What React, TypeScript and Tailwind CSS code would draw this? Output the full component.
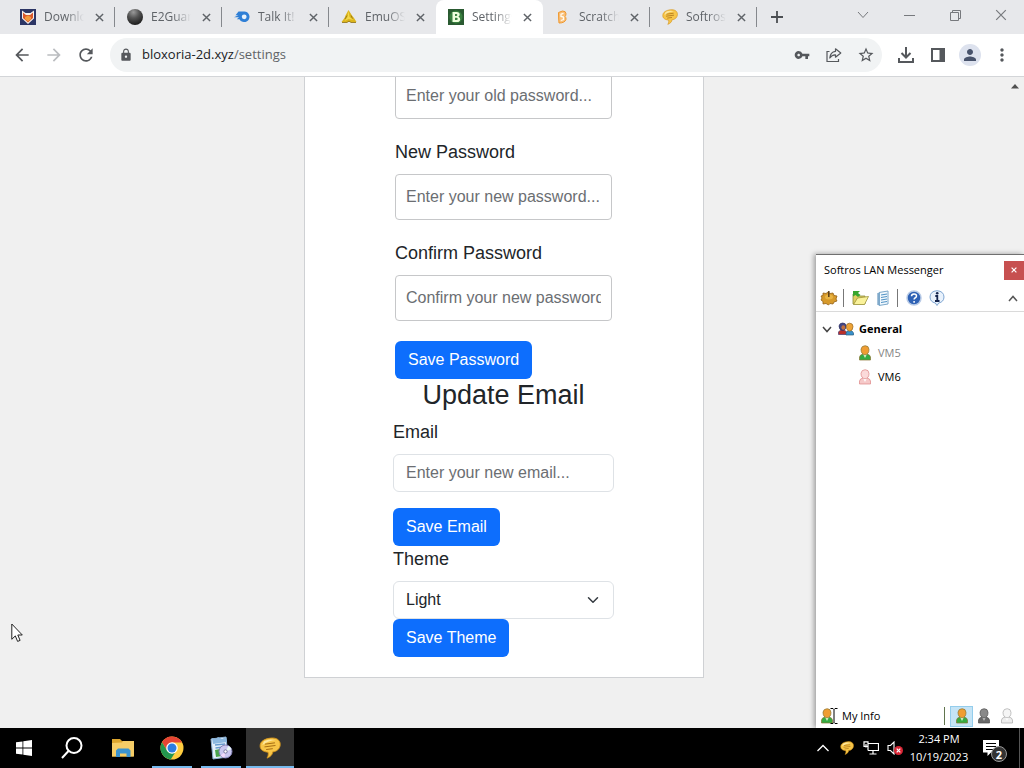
import React from "react";
import {
  MdArrowBack,
  MdArrowForward,
  MdRefresh,
  MdLock,
  MdVpnKey,
  MdStarBorder,
  MdMoreVert,
  MdPerson,
} from "react-icons/md";

function FoxIcon() {
  return (
    <svg viewBox="0 0 16 16" className="size-4">
      <rect width="16" height="16" fill="#2c3565" />
      <path d="M2 1.5 5.5 4h5L14 1.5v8L8 15 2 9.500z" fill="#f4f0ee" />
      <path d="M3 3.500 6 6h4l3-2.500V9l-5 4.500L3 9z" fill="#d9582b" />
      <path d="M5 8 8 6.500 11 8v2l-3 2.500L5 10z" fill="#f29a3c" />
    </svg>
  );
}

function SphereIcon() {
  return (
    <svg viewBox="0 0 16 16" className="size-4">
      <defs>
        <radialGradient id="sphere" cx="0.4" cy="0.2" r="0.8">
          <stop offset="0" stopColor="#9a9a9a" />
          <stop offset="0.45" stopColor="#555" />
          <stop offset="1" stopColor="#1c1c1c" />
        </radialGradient>
      </defs>
      <circle cx="8" cy="8" r="8" fill="url(#sphere)" />
    </svg>
  );
}

function TalkIcon() {
  return (
    <svg viewBox="0 0 16 16" className="size-4">
      <path d="M4.500 2.500h6a5.300 5.300 0 1 1-5 7.700H2.800L5 8.200H0l4.300-2H1.500z" fill="#2f7fd6" />
      <circle cx="10.200" cy="7.800" r="2.400" fill="#e8f2fc" />
    </svg>
  );
}

function EmuIcon() {
  return (
    <svg viewBox="0 0 16 16" className="size-4">
      <path d="M7.500 1 11 6.500 13 9l2.500 4H.5l3-4L4.500 6.500z" fill="#dcb51c" />
      <path d="m7.500 2 1 6 4 3-5-1-4 2 3-4z" fill="#f3d84a" />
      <path d="M1 13.500h5l2-1.500 2 1.500h5M6 6.500 4 10M10 6.500l1.500 3" fill="none" stroke="#94771a" strokeWidth="0.9" />
    </svg>
  );
}

function BloxIcon() {
  return (
    <svg viewBox="0 0 16 16" className="size-4">
      <rect width="16" height="16" fill="#2a5a31" />
      <circle cx="8" cy="8" r="6.500" fill="#39803f" />
      <path
        d="M4.500 3h4.200q3 0 3 2.500 0 1.600-1.300 2.200 1.800.6 1.800 2.500Q12.200 13 9 13H4.500zm2.500 2v2h1.300q1 0 1-1t-1-1zm0 3.800V11h1.500q1.200 0 1.200-1.100T8.500 8.800z"
        fill="#efffdd"
        fillRule="evenodd"
      />
    </svg>
  );
}

function ScratchIcon() {
  return (
    <svg viewBox="0 0 16 16" className="size-4">
      <path
        d="M3.500 3.500 7.500 2q3.500 0 3.500 2.700 0 1.800-1 2.800 1.200 1 1 2.800Q10 14 4 14l-.3-4z"
        fill="#f9bf78"
        stroke="#f0982d"
        strokeWidth="1"
      />
      <path d="M8.500 4.300 6 5.200v2.300l2.500.6v2.500L5.800 11.500" fill="none" stroke="#fffaf0" strokeWidth="1.300" />
    </svg>
  );
}

function ChatIcon({ className }: { className: string }) {
  return (
    <svg viewBox="0 0 20 20" className={className}>
      <path
        d="M10.500 1C16 .3 19.500 3 19.300 7c-.2 3.800-3.300 6.300-7 6.600.3 2-1.800 4.400-5 5.600 1-2 1.500-3.500.9-5.400C4 13.500.9 11.700 1 8 1.100 4 5 1.600 10.500 1z"
        fill="#f7c548"
        stroke="#d4941a"
        strokeWidth="0.800"
      />
      <path d="M4.500 3.800Q9 1.300 15 2.800 9 3 3 7.500z" fill="#fde79e" />
      <path d="m5.500 6.500 9-1.200M5 9l10-1.300M6.500 11.400l6-.8" stroke="#a66d12" strokeWidth="0.900" />
    </svg>
  );
}

function Cross({ className }: { className: string }) {
  return (
    <svg viewBox="0 0 10 10" className={className} fill="none" stroke="currentColor">
      <path d="m1 1 8 8M9 1 1 9" />
    </svg>
  );
}

const tabs = [
  { title: "Downloads", icon: <FoxIcon />, divider: true },
  { title: "E2Guardian", icon: <SphereIcon />, divider: true },
  { title: "Talk It!", icon: <TalkIcon />, divider: true },
  { title: "EmuOS v1", icon: <EmuIcon />, divider: false },
  { title: "Settings", icon: <BloxIcon />, active: true },
  { title: "Scratch - I", icon: <ScratchIcon />, divider: true },
  { title: "Softros LAN", icon: <ChatIcon className="size-4" />, divider: true },
];

function TabStrip() {
  return (
    <header className="flex h-[34px] items-stretch bg-[#e7e8eb] pl-2">
      {tabs.map((t) => (
        <div
          key={t.title}
          className={
            t.active
              ? "flex w-[107px] items-center rounded-t-lg bg-white pl-3"
              : "flex w-[107px] items-center pl-3"
          }
        >
          {t.icon}
          <span className="ml-2 w-10 overflow-hidden text-xs whitespace-nowrap text-[#5f6368] [mask-image:linear-gradient(to_right,black_55%,transparent)]">
            {t.title}
          </span>
          <button aria-label={`Close ${t.title}`} className="ml-auto flex size-4 items-center justify-center text-[#5f6368]">
            <Cross className="size-[9px] stroke-[1.600]" />
          </button>
          <span className={t.divider ? "ml-[7px] h-5 w-px bg-[#85888d]" : "ml-[7px] h-5 w-px"} />
        </div>
      ))}
      <button aria-label="New tab" className="flex w-10 items-center justify-center text-[#4b4e52]">
        <svg viewBox="0 0 12 12" className="size-3" stroke="currentColor" strokeWidth="1.800">
          <path d="M6 0v12M0 6h12" />
        </svg>
      </button>
      <div className="ml-auto flex h-[30px] text-[#77797d]">
        <button aria-label="Search tabs" className="flex w-[46px] items-center justify-center">
          <svg viewBox="0 0 12 8" className="h-2 w-3" fill="none" stroke="currentColor">
            <path d="m1 1 5 5.500L11 1" />
          </svg>
        </button>
        <button aria-label="Minimize" className="flex w-[46px] items-center justify-center">
          <span className="h-px w-[11px] bg-[#77797d]" />
        </button>
        <button aria-label="Restore" className="flex w-[46px] items-center justify-center">
          <svg viewBox="0 0 11 11" className="size-[11px]" fill="none" stroke="currentColor">
            <path d="M.5 2.500h8v8h-8zM2.500 2.500v-2h8v8h-2" />
          </svg>
        </button>
        <button aria-label="Close" className="flex w-[46px] items-center justify-center">
          <Cross className="size-3" />
        </button>
      </div>
    </header>
  );
}

const tool = "flex w-8 shrink-0 items-center justify-center";

function Toolbar() {
  return (
    <nav className="flex h-[43px] items-center border-b border-[#d3d5d8] bg-white px-1.5 text-[#55585c]">
      <button aria-label="Back" className={tool}>
        <MdArrowBack size={20} />
      </button>
      <button aria-label="Forward" className={tool + " text-[#bbbdc0]"}>
        <MdArrowForward size={20} />
      </button>
      <button aria-label="Reload" className={tool}>
        <MdRefresh size={20} />
      </button>
      <div className="ml-2 flex h-[34px] flex-1 items-center rounded-full bg-[#f1f3f4] pl-[9px]">
        <MdLock size={14} />
        <a href="#settings" className="ml-[9px] text-[13px] text-[#606367]">
          <span className="text-[#202124]">bloxoria-2d.xyz</span>/settings
        </a>
        <div className="ml-auto flex items-center">
          <button aria-label="Passwords" className={tool}>
            <MdVpnKey size={16} />
          </button>
          <button aria-label="Share" className={tool}>
            <svg viewBox="0 0 16 16" className="size-4" fill="none" stroke="currentColor" strokeWidth="1.200">
              <path d="M3.500 4.500h-2.500V14.500h11.500V12" />
              <path d="M9.500 1.800 14.800 6l-5.300 4.200V7.800Q6 7.500 3.800 11 4.300 5 9.500 4.300z" strokeLinejoin="round" />
            </svg>
          </button>
          <button aria-label="Bookmark" className={tool}>
            <MdStarBorder size={18} />
          </button>
        </div>
      </div>
      <button aria-label="Downloads" className={tool + " ml-2"}>
        <svg viewBox="0 0 18 18" className="size-[18px]" fill="none" stroke="currentColor" strokeWidth="2">
          <path d="M9 1v10M4.500 7 9 11.500 13.500 7M2 12v4h14v-4" />
        </svg>
      </button>
      <button aria-label="Side panel" className={tool}>
        <svg viewBox="0 0 14 14" className="size-[14px]" fill="none" stroke="currentColor" strokeWidth="2">
          <path d="M1 1h12v12H1z" />
          <path d="M8.500 1H13v12H8.500z" fill="currentColor" stroke="none" />
        </svg>
      </button>
      <button aria-label="Profile" className={tool}>
        <span className="flex size-[22px] items-center justify-center rounded-full bg-[#dde2ee] text-[#47526b]">
          <MdPerson size={18} />
        </span>
      </button>
      <button aria-label="Menu" className={tool}>
        <MdMoreVert size={20} />
      </button>
    </nav>
  );
}

const passwordInput =
  "block h-[46px] w-full rounded border border-[#c6c7c9] bg-white px-2.5 text-base text-[#212529] placeholder:text-[#6b6e72]";
const label = "mb-2 block text-lg leading-[27px] text-[#212529]";
const primary = "block h-[38px] rounded-md bg-[#0d6efd] px-[13px] text-base text-white";

function SettingsCard() {
  return (
    <section className="-mt-1 w-[400px] border border-t-0 border-[#cfd1d4] bg-white pr-px pb-5 font-['Liberation_Sans',Arial,sans-serif]">
      <form className="mx-auto w-[217px]">
        <input type="password" aria-label="Old Password" placeholder="Enter your old password..." className={passwordInput} />
        <label htmlFor="new-password" className={label + " mt-5"}>
          New Password
        </label>
        <input id="new-password" type="password" placeholder="Enter your new password..." className={passwordInput} />
        <label htmlFor="confirm-password" className={label + " mt-5"}>
          Confirm Password
        </label>
        <input id="confirm-password" type="password" placeholder="Confirm your new password..." className={passwordInput} />
        <button type="button" className={primary + " mt-5"}>
          Save Password
        </button>
      </form>
      <form className="mx-auto w-[221px]">
        <h2 className="mb-2 text-center text-[27px] leading-8 text-[#212529]">Update Email</h2>
        <label htmlFor="email" className={label}>
          Email
        </label>
        <input
          id="email"
          type="email"
          placeholder="Enter your new email..."
          className="block h-[38px] w-full rounded-md border border-[#dee2e6] bg-white px-3 text-base placeholder:text-[#6b6e72]"
        />
        <button type="button" className={primary + " mt-4"}>
          Save Email
        </button>
        <label htmlFor="theme" className={label}>
          Theme
        </label>
        <div className="relative">
          <select
            id="theme"
            className="block h-[38px] w-full appearance-none rounded-md border border-[#dee2e6] bg-white px-3 text-base text-[#212529]"
          >
            <option>Light</option>
            <option>Dark</option>
          </select>
          <svg
            viewBox="0 0 16 16"
            className="pointer-events-none absolute top-[13px] right-[15px] size-3"
            fill="none"
            stroke="#343a40"
            strokeWidth="2"
            strokeLinecap="round"
            strokeLinejoin="round"
          >
            <path d="m2 5 6 6 6-6" />
          </svg>
        </div>
        <button type="button" className={primary}>
          Save Theme
        </button>
      </form>
    </section>
  );
}

function Person({ head, body, edge, shirt = "#ffffff" }: { head: string; body: string; edge: string; shirt?: string }) {
  return (
    <svg viewBox="0 0 14 16" className="h-4 w-3.5">
      <path d="M1.500 15V12q.5-2.500 3.500-3h4q3 .5 3.500 3v3z" fill={body} stroke={edge} strokeWidth="0.700" />
      <path d="m5 9 2 4 2-4z" fill={shirt} />
      <path d="M3 4.200Q3.500.7 7.200.7T11 4.500Q11 9.300 7 9.800 3 9.300 3 4.200z" fill={head} stroke={edge} strokeWidth="0.700" />
    </svg>
  );
}

const online = <Person head="#ef9d33" body="#35ab42" edge="#8a7430" shirt="#dff3cf" />;

function Messenger() {
  return (
    <aside className="absolute right-0 bottom-0 flex h-[474px] w-52 flex-col border-t border-[#707070] bg-white text-[11px] text-black shadow-[-2px_0_5px_rgba(0,0,0,0.35)]">
      <div className="flex h-[30px] items-center pl-2">
        <h1>Softros LAN Messenger</h1>
        <button
          aria-label="Close messenger"
          className="ml-auto flex h-[19px] w-5 items-center justify-center bg-[#c75050] text-white"
        >
          <Cross className="size-1.5 stroke-[2]" />
        </button>
      </div>
      <div className="flex h-[27px] items-center border-b border-[#dadada] pr-1.5 pl-1">
        <button aria-label="Preferences">
          <svg viewBox="0 0 18 16" className="h-4 w-[18px]">
            <path
              d="m1 6 2-.5L3 3l3 .5L8 2l2 1.500L13 3l1 2.500 3 .5-1 3 1 2-3 1-1 2-3-.5L8.500 15 6 13.500l-3 .5v-2.500L1 10l1-2z"
              fill="#d79a2b"
              stroke="#936118"
              strokeWidth="0.800"
            />
            <ellipse cx="9" cy="7" rx="4" ry="2.500" fill="#e9b545" />
            <path d="M8.800 1v6" stroke="#573c19" strokeWidth="1.500" />
          </svg>
        </button>
        <span className="ml-[5px] h-[18px] w-px bg-[#777]" />
        <button aria-label="Received files" className="ml-2">
          <svg viewBox="0 0 17 16" className="h-4 w-[17px]">
            <path d="M1 14V4h5l1 2h6v8z" fill="#e0ce61" stroke="#8c8b3b" strokeWidth="0.800" />
            <path d="m1.500 14.500 4-6.500 11-1.500-4 8z" fill="#faf29b" stroke="#9c943b" strokeWidth="0.800" />
            <path d="M1 1h7l-2 2 2.500 2L6 7 3.500 5 1 6.500z" fill="#38a52e" />
          </svg>
        </button>
        <button aria-label="History" className="ml-[7px]">
          <svg viewBox="0 0 14 16" className="h-4 w-3.5">
            <path d="M3 2.500 12 1v13l-9 1.500z" fill="#f1f8fd" stroke="#7aa7c9" />
            <path d="m5 5 6-1M5 7.500l6-1M5 10l6-1M5 12.500l6-1" stroke="#4e91c4" />
            <path d="M1 4h3M1 6h3M1 8h3M1 10h3M1 12h3M1 14h3" stroke="#3978ad" strokeWidth="0.900" />
          </svg>
        </button>
        <span className="ml-[7px] h-[18px] w-px bg-[#777]" />
        <button aria-label="Help" className="ml-2">
          <svg viewBox="0 0 16 16" className="size-4">
            <circle cx="8" cy="8" r="7" fill="#2f62b5" stroke="#b9cbe6" strokeWidth="1.500" />
            <path d="M5.500 6.300Q5.500 4 8 4t2.500 2Q10.500 7.200 9 8q-.9.500-.9 1.500M8.100 11v1.700" fill="none" stroke="white" strokeWidth="1.500" />
          </svg>
        </button>
        <button aria-label="About" className="ml-[7px]">
          <svg viewBox="0 0 16 16" className="size-4">
            <path d="M8 .7q6.800.5 7 6.300Q14.800 12 9.700 13L8 15.500 6.300 13Q1.200 12 1 7 1.200 1.200 8 .7z" fill="#e9f2fc" stroke="#7fa6d2" />
            <circle cx="8.200" cy="3.300" r="1.300" fill="#15254d" />
            <path d="M6.300 6H8.300V10.800M6 11h4.500" fill="none" stroke="#15254d" strokeWidth="1.800" />
          </svg>
        </button>
        <button aria-label="Collapse toolbar" className="ml-auto">
          <svg viewBox="0 0 10 7" className="h-[7px] w-2.5" fill="none" stroke="#555" strokeWidth="1.500">
            <path d="m1 6 4-4.500L9 6" />
          </svg>
        </button>
      </div>
      <ul className="mt-[5px] flex-1 leading-6">
        <li>
          <div className="flex h-6 items-center pl-1.5 font-bold">
            <svg viewBox="0 0 10 7" className="mr-1.5 h-[7px] w-2.5" fill="none" stroke="#444" strokeWidth="1.500">
              <path d="m1 1 4 4.500L9 1" />
            </svg>
            <svg viewBox="0 0 16 14" className="mr-[5px] h-3.5 w-4">
              <path d="M.5 12.500V10q1-2 4-2.500 3 .5 4 2.500v2.500z" fill="#ba3029" stroke="#49366d" strokeWidth="0.700" />
              <path d="M1 4Q1.500 1 4.700 1T8 4q0 4-3.300 4.500Q1 8 1 4z" fill="#434786" stroke="#292d5f" strokeWidth="0.700" />
              <ellipse cx="5.300" cy="5.500" rx="1.900" ry="2.200" fill="#c2713e" />
              <path d="M8 13v-2q1-2.500 3.500-3 3 .5 4 3v2z" fill="#3890cb" stroke="#2a5e80" strokeWidth="0.700" />
              <path d="M8.300 4Q8.500 1.200 11.700 1.200T15 4.500q0 4.200-3.300 4.700Q8.300 8.700 8.300 4z" fill="#eda337" stroke="#97651e" strokeWidth="0.700" />
            </svg>
            General
          </div>
          <ul>
            <li className="flex h-6 items-center gap-1.5 pl-[42px] text-[#858585]">
              {online}
              VM5
            </li>
            <li className="flex h-6 items-center gap-1.5 pl-[42px]">
              <Person head="#fbdada" body="#f6c9c9" edge="#dc8484" />
              VM6
            </li>
          </ul>
        </li>
      </ul>
      <div className="flex h-6 items-center pl-1">
        {online}
        <svg viewBox="0 0 8 16" className="-ml-1 h-4 w-2" fill="none" stroke="black">
          <path d="M.5.500H3L4 1.500 5 .5h2.500M4 1.500v13M.5 15.500H3l1-1 1 1h2.500" />
        </svg>
        <button className="ml-1">My Info</button>
        <span className="ml-auto h-[18px] w-px bg-[#61754e]" />
        <button aria-label="Online" className="ml-[5px] flex h-[21px] w-[23px] items-center justify-center border border-[#94cdec] bg-[#c5e4f6]">
          {online}
        </button>
        <button aria-label="Away" className="ml-1">
          <Person head="#898989" body="#696969" edge="#4f4f4f" shirt="#bdbdbd" />
        </button>
        <button aria-label="Offline" className="mr-2.5 ml-[9px]">
          <Person head="#f5f5f5" body="#ededed" edge="#a9a9a9" />
        </button>
      </div>
    </aside>
  );
}

const task = "relative flex h-10 w-12 shrink-0 items-center justify-center";

function Taskbar() {
  return (
    <footer className="flex h-10 items-center bg-black text-white">
      <button aria-label="Start" className={task}>
        <svg viewBox="0 0 16 16" className="size-4" fill="white">
          <path d="M0 2.300 6.500 1.400v6.200H0zM7.300 1.300 16 0v7.600H7.300zM0 8.400h6.500v6.200L0 13.700zM7.300 8.400H16V16l-8.700-1.300z" />
        </svg>
      </button>
      <button aria-label="Search" className={task}>
        <svg viewBox="0 0 22 22" className="size-[22px]" fill="none" stroke="white" strokeWidth="2">
          <circle cx="13" cy="8.500" r="7.500" />
          <path d="m7.500 14-6.500 7" />
        </svg>
      </button>
      <div className="ml-[3px] flex gap-px">
        <button aria-label="File Explorer" className={task}>
          <svg viewBox="0 0 22 18" className="h-[18px] w-[22px]">
            <path d="M0 0h8l2 2h11.500v15.500H0z" fill="#dca52e" />
            <path d="M0 4 10 3.500 11 2h11v15.500H0z" fill="#f6cd67" />
            <path d="M4 18v-6.500L6 9.500h10.500l2 2V18h-4v-3.500H8V18z" fill="#3b93cf" />
          </svg>
        </button>
        <button aria-label="Chrome" className={task}>
          <svg viewBox="0 0 24 24" className="size-6">
            <circle cx="12" cy="12" r="11.500" fill="#ffcd40" />
            <path d="M2 6.300A11.500 11.500 0 0 1 22 6.500H12L7.300 14.700z" fill="#e64434" />
            <path d="M2 6.300 7.300 15 12 17.300l3-.5-4.300 6.600A11.500 11.500 0 0 1 2 6.300z" fill="#23964e" />
            <circle cx="12" cy="12" r="5.800" fill="white" />
            <circle cx="12" cy="12" r="4.500" fill="#2d7de1" />
          </svg>
          <span className="absolute bottom-0 h-0.5 w-10 bg-[#76b9ed]" />
        </button>
        <button aria-label="Installer" className={task}>
          <svg viewBox="0 0 24 24" className="size-6">
            <path d="m2 3 15-2 2 20-15 2z" fill="#e5f0fa" stroke="#8cafd0" />
            <path d="m3 2 4 1 2-2 4 2 4-2 1 5-14 2z" fill="#8db9df" />
            <path d="m6 9 10-1M6.500 12l8-1" stroke="#679bcc" strokeWidth="1.300" />
            <path d="m6 14 5-1 2 7-6 1z" fill="#4aa34b" />
            <circle cx="16.500" cy="15.500" r="6.500" fill="#cac8ef" stroke="#8482b6" />
            <path d="m16.500 15.500 3-5.700a6.500 6.500 0 0 1 3 3.500z" fill="#eaf9f5" />
            <path d="m16.500 15.500-5 4a6.500 6.500 0 0 0 4 2.300z" fill="#f2dafa" />
            <circle cx="16.500" cy="15.500" r="1.700" fill="white" stroke="#77769c" />
          </svg>
          <span className="absolute bottom-0 h-0.5 w-10 bg-[#76b9ed]" />
        </button>
        <button aria-label="Softros Messenger" className={task + " bg-[#333333]"}>
          <ChatIcon className="size-[22px]" />
          <span className="absolute bottom-0 h-0.5 w-12 bg-[#76b9ed]" />
        </button>
      </div>
      <div className="ml-auto flex items-center">
        <button aria-label="Hidden icons" className="flex w-6 justify-center">
          <svg viewBox="0 0 12 8" className="h-2 w-3" fill="none" stroke="white" strokeWidth="1.300">
            <path d="m.5 7 5.500-5.500L11.500 7" />
          </svg>
        </button>
        <button aria-label="Messages" className="flex w-6 justify-center">
          <ChatIcon className="size-3.5" />
        </button>
        <button aria-label="Network" className="flex w-6 justify-center">
          <svg viewBox="0 0 16 14" className="h-3.5 w-4" fill="none" stroke="white" strokeWidth="1.200">
            <path d="M5 2.500h10.500v7H5M3 6v.500M3 3v3M5 9.500V5M10 9.500v3M6.500 13h7M1 .8h4v4.500H1z" />
          </svg>
        </button>
        <button aria-label="Volume" className="flex w-6 justify-center">
          <svg viewBox="0 0 16 14" className="h-3.5 w-4">
            <path d="M1 4.500h2.500L7 1v12L3.500 9.500H1z" fill="none" stroke="white" strokeWidth="1.100" />
            <circle cx="11.500" cy="9.500" r="4.500" fill="#d92635" />
            <path d="m9.700 7.700 3.600 3.600M13.300 7.700l-3.600 3.600" stroke="white" strokeWidth="1.200" />
          </svg>
        </button>
        <div className="w-16 text-center text-[11px] leading-[18px]">
          <div>2:34 PM</div>
          <div>10/19/2023</div>
        </div>
        <button aria-label="Notifications" className="relative flex h-10 w-12 items-center justify-center">
          <svg viewBox="0 0 18 16" className="-ml-2 h-4 w-[18px]">
            <path d="M1 0h16v12.500H9L5.500 16v-3.500H1z" fill="white" />
            <path d="M4 3.500h10M4 6.500h10M4 9.500h7" stroke="black" strokeWidth="1.200" />
          </svg>
          <span className="absolute top-[18px] right-3 flex size-4 items-center justify-center rounded-full border border-[#999] bg-[#333] text-[11px] leading-none font-bold">
            2
          </span>
        </button>
        <span className="mr-1 h-10 w-px bg-[#555]" />
      </div>
    </footer>
  );
}

export default function App() {
  return (
    <div className="flex h-screen flex-col overflow-hidden bg-[#f0f0f0] font-['Open_Sans','Noto_Sans',sans-serif]">
      <TabStrip />
      <Toolbar />
      <main className="relative flex min-h-0 flex-1 items-start justify-center overflow-hidden pr-4">
        <SettingsCard />
        <svg viewBox="0 0 8 5" className="absolute top-[7px] right-[5px] h-[5px] w-2" fill="#505050">
          <path d="M0 4.500 4 0l4 4.500z" />
        </svg>
        <Messenger />
        <svg viewBox="0 0 12 20" className="absolute top-[546px] left-[11px] h-5 w-3">
          <path d="M.8 1v15.300l3.500-3.400 2.300 5.500 2.500-1-2.300-5.400h4.500z" fill="white" stroke="#222" />
        </svg>
      </main>
      <Taskbar />
    </div>
  );
}
